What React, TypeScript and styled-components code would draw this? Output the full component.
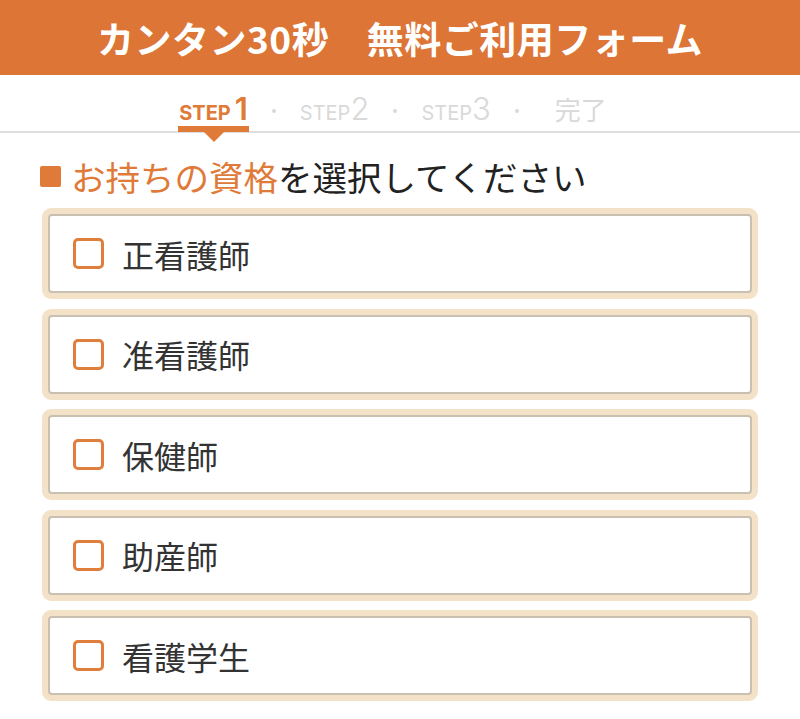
import React from 'react'
import styled, { createGlobalStyle } from 'styled-components'

const GlobalStyle = createGlobalStyle`
  body {
    margin: 0;
    background: #fff;
    font-family: "Noto Sans CJK JP", "Noto Sans", sans-serif;
  }
`

const steps = [
  { label: 'STEP', num: '1', active: true },
  { label: 'STEP', num: '2', active: false },
  { label: 'STEP', num: '3', active: false },
]

const qualifications = ['正看護師', '准看護師', '保健師', '助産師', '看護学生']

const App = () => {
  return (
    <>
      <GlobalStyle />
      <Header>カンタン30秒　無料ご利用フォーム</Header>
      <StepBar>
        {steps.map((s) => (
          <React.Fragment key={s.num}>
            <Step $active={s.active}>
              <StepLabel $active={s.active}>{s.label}</StepLabel>
              <StepNum $active={s.active}>{s.num}</StepNum>
            </Step>
            <Dot />
          </React.Fragment>
        ))}
        <Done>完了</Done>
      </StepBar>
      <Main>
        <Heading>
          <Bullet />
          <Accent>お持ちの資格</Accent>を選択してください
        </Heading>
        <List>
          {qualifications.map((q) => (
            <Card key={q}>
              <CardInner>
                <CheckBox />
                <CardLabel>{q}</CardLabel>
              </CardInner>
            </Card>
          ))}
        </List>
      </Main>
    </>
  )
}

export default App

const Header = styled.header`
  height: 75px;
  background: #dc7535;
  color: #fff;
  display: flex;
  align-items: center;
  justify-content: center;
  font-size: 37px;
  font-weight: 700;
  letter-spacing: 0.5px;
`

const StepBar = styled.nav`
  height: 56px;
  border-bottom: 2px solid #dedede;
  display: flex;
  align-items: flex-end;
  justify-content: center;
  gap: 24px;
  padding-right: 14px;
  box-sizing: content-box;
`

const Step = styled.div<{ $active: boolean }>`
  position: relative;
  display: flex;
  align-items: baseline;
  height: 44px;
  font-family: Inter, "Noto Sans", sans-serif;
  color: ${(p) => (p.$active ? '#e07a38' : '#d9d9d9')};

  &::before {
    content: '';
    display: ${(p) => (p.$active ? 'block' : 'none')};
    position: absolute;
    left: -1px;
    right: -1px;
    bottom: -1px;
    height: 6px;
    background: #e07a38;
  }

  &::after {
    content: '';
    display: ${(p) => (p.$active ? 'block' : 'none')};
    position: absolute;
    left: 50%;
    bottom: -11px;
    transform: translateX(-50%);
    border-left: 10px solid transparent;
    border-right: 10px solid transparent;
    border-top: 10px solid #e07a38;
  }
`

const StepLabel = styled.span<{ $active: boolean }>`
  font-size: 20px;
  font-weight: ${(p) => (p.$active ? 700 : 400)};
  line-height: 44px;
`

const StepNum = styled.span<{ $active: boolean }>`
  font-size: 31px;
  font-weight: ${(p) => (p.$active ? 600 : 300)};
  line-height: 44px;
  margin-left: ${(p) => (p.$active ? '4px' : '0')};
`

const Dot = styled.span`
  width: 4px;
  height: 4px;
  border-radius: 50%;
  background: #d9d9d9;
  margin-bottom: 18px;
`

const Done = styled.div`
  height: 44px;
  line-height: 44px;
  font-size: 26px;
  color: #d9d9d9;
  margin-left: 12px;
`

const Main = styled.main`
  padding: 21px 42px 0;
`

const Heading = styled.h2`
  margin: 0 0 10px;
  display: flex;
  align-items: center;
  font-size: 34.5px;
  font-weight: 400;
  line-height: 44px;
  color: #222;
`

const Bullet = styled.span`
  width: 21px;
  height: 21px;
  background: #e07a38;
  border-radius: 2px;
  margin-right: 10px;
  margin-left: -2px;
`

const Accent = styled.span`
  color: #e07a38;
`

const List = styled.div`
  display: flex;
  flex-direction: column;
  gap: 9.5px;
`

const Card = styled.div`
  height: 91px;
  box-sizing: border-box;
  padding: 6px;
  background: #f3e1c8;
  border-radius: 9px;
`

const CardInner = styled.label`
  height: 100%;
  box-sizing: border-box;
  border: 2px solid #c9c0b2;
  border-radius: 4px;
  background: #fff;
  display: flex;
  align-items: center;
  padding-left: 23px;
`

const CheckBox = styled.span`
  width: 31px;
  height: 31px;
  box-sizing: border-box;
  border: 3px solid #e07f3d;
  border-radius: 5px;
  margin-right: 18px;
`

const CardLabel = styled.span`
  font-size: 32px;
  color: #333;
`
